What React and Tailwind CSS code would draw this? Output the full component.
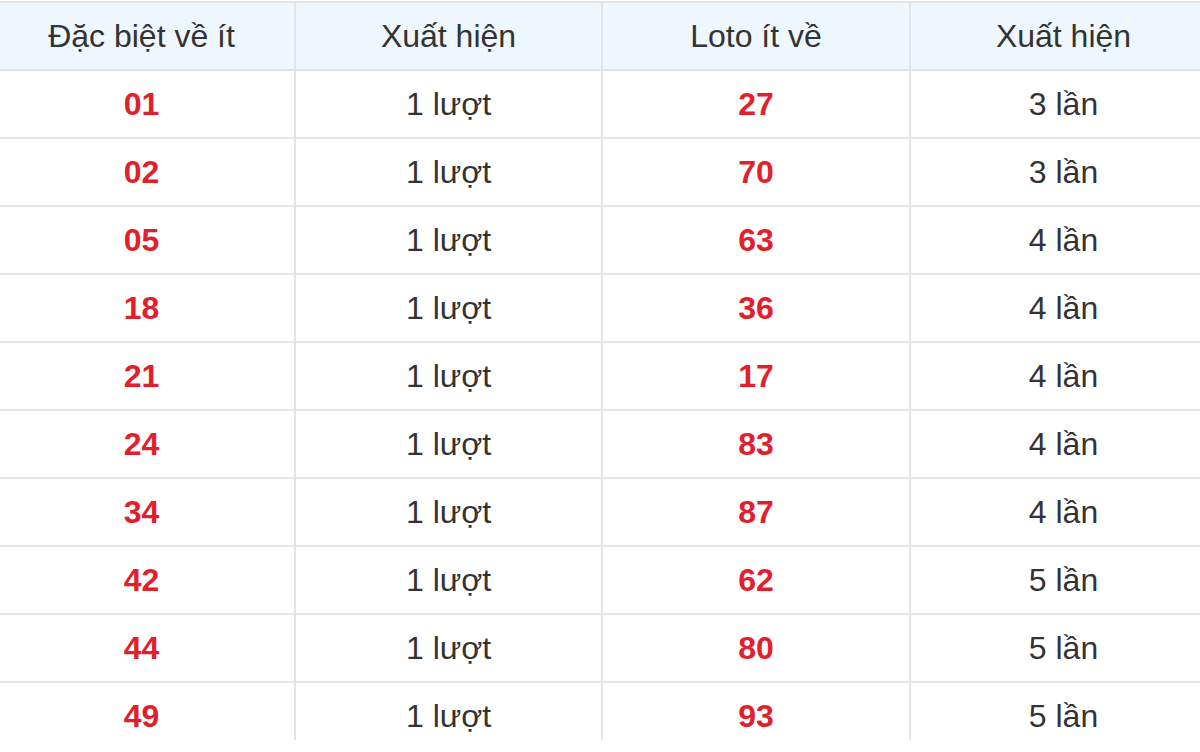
const rows = [
  ['01', '1 lượt', '27', '3 lần'],
  ['02', '1 lượt', '70', '3 lần'],
  ['05', '1 lượt', '63', '4 lần'],
  ['18', '1 lượt', '36', '4 lần'],
  ['21', '1 lượt', '17', '4 lần'],
  ['24', '1 lượt', '83', '4 lần'],
  ['34', '1 lượt', '87', '4 lần'],
  ['42', '1 lượt', '62', '5 lần'],
  ['44', '1 lượt', '80', '5 lần'],
  ['49', '1 lượt', '93', '5 lần'],
];

const headers = ['Đặc biệt về ít', 'Xuất hiện', 'Loto ít về', 'Xuất hiện'];

export default function App() {
  return (
    <div className="w-[1200px] h-[752px] bg-white overflow-hidden">
      <div className="h-[740px] overflow-hidden pt-px">
        <table
          className="ml-[-13px] w-[1229px] table-fixed border-collapse text-[32px] text-[#333]"
          style={{ fontFamily: '"Liberation Sans", Arial, sans-serif' }}
        >
          <colgroup>
            <col className="w-[307px]" />
            <col className="w-[307px]" />
            <col className="w-[308px]" />
            <col className="w-[307px]" />
          </colgroup>
          <thead>
            <tr className="h-[68px] bg-[#eef6fe]">
              {headers.map((h, i) => (
                <th key={i} className="border-2 border-[#e2e4e7] font-normal text-center align-middle">
                  {h}
                </th>
              ))}
            </tr>
          </thead>
          <tbody>
            {rows.map((r, i) => (
              <tr key={i} className="h-[68px]">
                <td className="border-2 border-[#e2e4e7] text-center font-bold text-[#e2202c]">{r[0]}</td>
                <td className="border-2 border-[#e2e4e7] text-center">{r[1]}</td>
                <td className="border-2 border-[#e2e4e7] text-center font-bold text-[#e2202c]">{r[2]}</td>
                <td className="border-2 border-[#e2e4e7] text-center">{r[3]}</td>
              </tr>
            ))}
          </tbody>
        </table>
      </div>
    </div>
  );
}
